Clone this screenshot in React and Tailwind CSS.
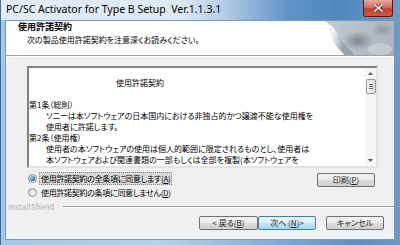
const JP = "font-['Noto_Sans_CJK_JP',sans-serif] [font-feature-settings:'palt']";

function Radio({ checked }) {
  return (
    <span className="w-[9px] h-[9px] rounded-full border border-[#8b8b8b] bg-[linear-gradient(135deg,#d4d4d4,#fbfbfb)] flex items-center justify-center shrink-0">
      {checked && (
        <span className="w-[5px] h-[5px] rounded-full bg-[radial-gradient(circle_at_35%_35%,#b9e2fb,#2b6ea8_60%,#174a7a)]" />
      )}
    </span>
  );
}

function Btn({ children, primary, className }) {
  return (
    <div
      className={
        "h-[14px] flex items-center justify-center rounded-[2px] border text-[8px] leading-none text-[#222] " +
        (primary
          ? "border-[#3c7fb1] bg-[linear-gradient(#eaf6fd_0%,#d9f0fc_50%,#bee6fd_50%,#a7d9f5_100%)] "
          : "border-[#707070] bg-[linear-gradient(#f2f2f2_0%,#ebebeb_50%,#dddddd_50%,#cfcfcf_100%)] ") +
        className
      }
    >
      {children}
    </div>
  );
}

function PageCurl() {
  return (
    <svg width="72" height="34" viewBox="0 0 72 34" className="shrink-0">
      <defs>
        <linearGradient id="bgG" x1="0" y1="0" x2="1" y2="0">
          <stop offset="0" stopColor="#c5ccd3" />
          <stop offset="1" stopColor="#aab3bb" />
        </linearGradient>
        <linearGradient id="curlG" x1="0" y1="0" x2="1" y2="0.3">
          <stop offset="0" stopColor="#ffffff" />
          <stop offset="0.5" stopColor="#eef0f2" />
          <stop offset="1" stopColor="#9aa3ab" />
        </linearGradient>
        <radialGradient id="blob" cx="0.5" cy="0.5" r="0.5">
          <stop offset="0" stopColor="#7d8892" />
          <stop offset="1" stopColor="#7d8892" stopOpacity="0" />
        </radialGradient>
      </defs>
      <rect x="0" y="0" width="72" height="34" fill="url(#bgG)" />
      <ellipse cx="36" cy="20" rx="16" ry="10" fill="url(#blob)" />
      <ellipse cx="60" cy="9" rx="10" ry="7" fill="url(#blob)" opacity="0.6" />
      <ellipse cx="58" cy="28" rx="12" ry="6" fill="#d6dbe0" opacity="0.5" />
      <path d="M0 0 L3 0 C9 10 15 22 22 34 L0 34 Z" fill="#ffffff" />
      <path d="M3 0 C12 6 20 16 23 34 L22 34 C15 22 9 10 3 0 Z" fill="#a9b1b8" />
      <path d="M3 0 C10 4 17 12 21 22 C24 28 24 31 23 34 C16 28 13 24 11 20 C8 12 5 5 3 0 Z" fill="url(#curlG)" />
      <path d="M21 22 C26 26 30 30 32 34 L23 34 C24 31 24 28 21 22 Z" fill="#8d969e" opacity="0.7" />
    </svg>
  );
}

export default function App() {
  const lines = [
    { t: "第1条（総則）", indent: false },
    { t: "ソニーは本ソフトウェアの日本国内における非独占的かつ譲渡不能な使用権を", indent: true },
    { t: "使用者に許諾します。", indent: true },
    { t: "第2条（使用権）", indent: false },
    { t: "使用者の本ソフトウェアの使用は個人的範囲に限定されるものとし、使用者は", indent: true },
    { t: "本ソフトウェアおよび関連書類の一部もしくは全部を複製(本ソフトウェアを", indent: true },
  ];
  return (
    <div className="w-[400px] h-[245px] overflow-hidden flex flex-col bg-[linear-gradient(to_right,#a3c7e8_0%,#b4d2ee_40%,#7eaad6_70%,#5a8fc4_90%,#6b9bcb_100%)] border-l border-[#3f6e9c]">
      {/* title bar */}
      <div className="h-[20px] shrink-0 flex items-start justify-between bg-[linear-gradient(to_right,#e3ecf6_0%,#dce8f4_45%,#b7cfe7_55%,#5f93c6_72%,#4f87bd_85%,#6c9ccb_100%)]">
        <div className="pl-[5px] pt-[2px] text-[10.5px] leading-[15px] text-black font-['Noto_Sans',sans-serif] whitespace-pre">
          PC/SC Activator for Type B Setup  Ver.1.1.3.1
        </div>
        <div className="mr-[7px] w-[30px] h-[17px] rounded-b-[3px] border border-t-0 border-[#5c1a12] bg-[linear-gradient(#e9a99c_0%,#d7705f_45%,#c2402c_55%,#c95a3f_100%)] flex items-center justify-center">
          <svg width="9" height="8" viewBox="0 0 9 8">
            <path d="M1 1 L8 7 M8 1 L1 7" stroke="#3a2a28" strokeWidth="3" strokeLinecap="square" />
            <path d="M1 1 L8 7 M8 1 L1 7" stroke="#ffffff" strokeWidth="1.6" strokeLinecap="square" />
          </svg>
        </div>
      </div>

      {/* client */}
      <div className={"ml-[4px] w-[390px] h-[220px] shrink-0 flex flex-col bg-[#f0f0f0] border border-[#7a98b8] " + JP}>
        {/* header */}
        <div className="h-[34px] shrink-0 bg-white flex justify-between">
          <div className="pl-[12px] pt-0">
            <div className="text-[9px] leading-[12px] font-bold text-black">使用許諾契約</div>
            <div className="pl-[9px] pt-[1px] text-[8px] leading-[12px] text-black">次の製品使用許諾契約を注意深くお読みください。</div>
          </div>
          <PageCurl />
        </div>
        <div className="h-px bg-[#a0a0a0] shrink-0" />
        <div className="h-px bg-white shrink-0" />

        {/* textbox */}
        <div className="mt-[9px] ml-[21px] w-[351px] h-[102px] shrink-0 flex bg-white border-2 border-t-[#828282] border-l-[#828282] border-r-[#e3e3e3] border-b-[#e3e3e3] overflow-hidden">
          <div className="flex-1 overflow-hidden text-[8px] leading-[11px] text-black whitespace-nowrap">
            <div className="pt-[9px] pl-[87px]">使用許諾契約</div>
            <div className="mt-[11px]">
              {lines.map((l, i) => (
                <div key={i} className={l.indent ? "pl-[17px]" : "pl-0"}>{l.t}</div>
              ))}
              <div className="pl-[17px] h-[3px] overflow-hidden">使用者の機器にインストールすることを除く)することはできません。</div>
            </div>
          </div>
          <div className="w-[11px] shrink-0 bg-[#f7f7f7] flex flex-col items-center">
            <svg width="7" height="9" viewBox="0 0 7 9" className="mt-[1px]">
              <path d="M1 6 L3.5 3 L6 6 Z" fill="#5a5a5a" />
            </svg>
            <div className="mt-[1px] w-[10px] h-[15px] rounded-[2px] border border-[#9a9a9a] bg-[linear-gradient(to_right,#f4f4f4,#dadada)] flex flex-col items-center justify-center gap-[1px]">
              <div className="w-[4px] h-px bg-[#6a6a6a]" />
              <div className="w-[4px] h-px bg-[#6a6a6a]" />
              <div className="w-[4px] h-px bg-[#6a6a6a]" />
            </div>
            <div className="flex-1" />
            <svg width="7" height="9" viewBox="0 0 7 9" className="mb-[1px]">
              <path d="M1 3 L3.5 6 L6 3 Z" fill="#5a5a5a" />
            </svg>
          </div>
        </div>

        {/* radios + print */}
        <div className="flex justify-between shrink-0">
          <div className="pl-[22px] pt-[3px] flex flex-col">
            <div className="h-[14px] flex items-center gap-[2px]">
              <Radio checked />
              <span className="flex text-[8px] leading-[11px] px-px tracking-[-0.3px] bg-[#d9d9d9] border border-dotted border-[#808080] text-black whitespace-nowrap">
                <span>使用許諾契約の全条項に同意します(</span>
                <span className="underline">A</span>
                <span>)</span>
              </span>
            </div>
            <div className="h-[14px] flex items-center gap-[2px]">
              <Radio />
              <span className="flex text-[8px] leading-[11px] px-[2px] tracking-[-0.3px] text-black whitespace-nowrap">
                <span>使用許諾契約の条項に同意しません(</span>
                <span className="underline">D</span>
                <span>)</span>
              </span>
            </div>
          </div>
          <Btn className="w-[58px] h-[14px] mt-[5px] mr-[19px]">
            印刷(<span className="underline">P</span>)
          </Btn>
        </div>

        {/* InstallShield separator */}
        <div className="mt-[3px] h-[10px] flex items-center shrink-0">
          <span className="pl-[2px] text-[8px] leading-[10px] text-[#b0b0b0]">InstallShield</span>
          <div className="ml-[9px] flex-1 flex flex-col">
            <div className="h-px bg-[#a0a0a0]" />
            <div className="h-px bg-white" />
          </div>
        </div>

        {/* buttons */}
        <div className="mt-[4px] flex justify-end pr-[10px] shrink-0">
          <Btn className="w-[59px]">
            &lt; 戻る(<span className="underline">B</span>)
          </Btn>
          <Btn primary className="w-[58px]">
            次へ (<span className="underline">N</span>)&gt;
          </Btn>
          <Btn className="w-[58px] ml-[10px]">キャンセル</Btn>
        </div>
      </div>
    </div>
  );
}
